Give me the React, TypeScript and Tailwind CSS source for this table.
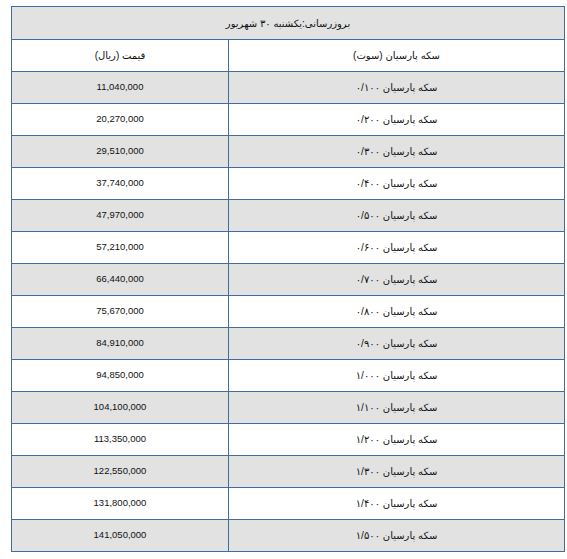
import React from 'react';

const rows: [string, string][] = [
  ['۰/۱۰۰', '11,040,000'],
  ['۰/۲۰۰', '20,270,000'],
  ['۰/۳۰۰', '29,510,000'],
  ['۰/۴۰۰', '37,740,000'],
  ['۰/۵۰۰', '47,970,000'],
  ['۰/۶۰۰', '57,210,000'],
  ['۰/۷۰۰', '66,440,000'],
  ['۰/۸۰۰', '75,670,000'],
  ['۰/۹۰۰', '84,910,000'],
  ['۱/۰۰۰', '94,850,000'],
  ['۱/۱۰۰', '104,100,000'],
  ['۱/۲۰۰', '113,350,000'],
  ['۱/۳۰۰', '122,550,000'],
  ['۱/۴۰۰', '131,800,000'],
  ['۱/۵۰۰', '141,050,000'],
];

const cell = 'border border-[#3f6e9e] h-[32px] p-0 text-center align-middle';

export default function App() {
  return (
    <div className="min-h-[559px] bg-white pl-[11px] pt-[6px] font-['Liberation_Sans','DejaVu_Sans',sans-serif] text-[10px] text-[#111]">
      <table dir="rtl" className="w-[553px] table-fixed border-collapse">
        <colgroup>
          <col className="w-[336px]" />
          <col className="w-[217px]" />
        </colgroup>
        <tbody>
          <tr className="bg-[#e2e2e2]">
            <td colSpan={2} className={`${cell} h-[33px]`}>
              بروزرسانی:یکشنبه ۳۰ شهریور
            </td>
          </tr>
          <tr className="bg-white">
            <td className={cell}>سکه پارسیان (سوت)</td>
            <td className={cell}>قیمت (ریال)</td>
          </tr>
          {rows.map(([weight, price], i) => (
            <tr key={weight} className={i % 2 === 0 ? 'bg-[#e2e2e2]' : 'bg-white'}>
              <td className={cell}>سکه پارسیان {weight}</td>
              <td className={`${cell} text-[9.5px]`}>{price}</td>
            </tr>
          ))}
        </tbody>
      </table>
    </div>
  );
}
